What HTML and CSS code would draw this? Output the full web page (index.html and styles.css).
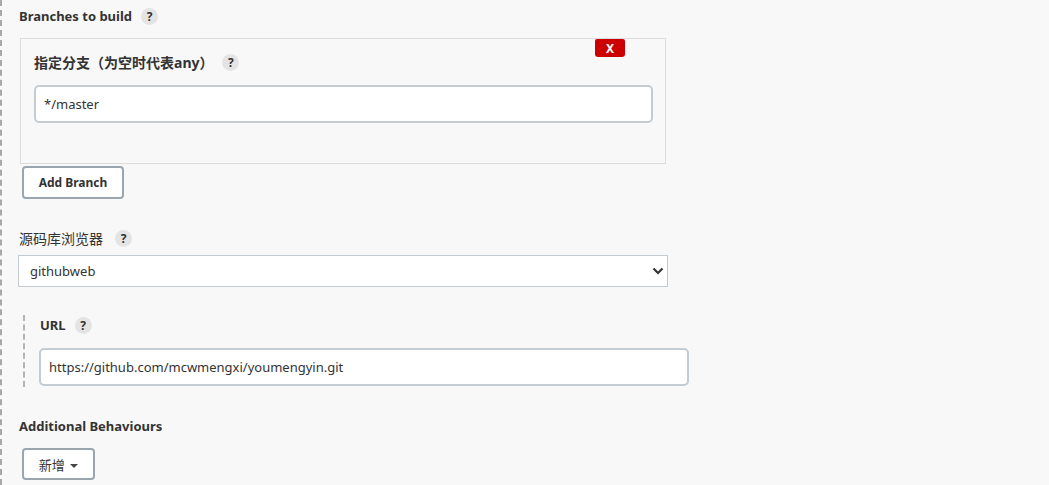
FILE: index.html
```html
<!DOCTYPE html>
<html>
<head>
    <meta charset="utf-8">
    <title>Git configuration</title>
    <link rel="stylesheet" href="styles.css">
</head>
<body>
<div class="page">
    <div class="field-label bold first">
        <span>Branches to build</span>
        <span class="help">?</span>
    </div>

    <div class="repeated">
        <button class="delete" type="button">X</button>
        <div class="field-label bold">
            <span class="cjk">指定分支（为空时代表any）</span>
            <span class="help">?</span>
        </div>
        <input class="text-box" type="text" value="*/master">
    </div>
    <button class="btn add-branch" type="button">Add Branch</button>

    <div class="field-label browser-label">
        <span class="cjk">源码库浏览器</span>
        <span class="help">?</span>
    </div>
    <div class="select-wrap">
        <select class="select-box">
            <option>githubweb</option>
        </select>
        <svg class="chevron" width="12" height="8" viewBox="0 0 12 8"><path d="M1.5 1.5 L6 6 L10.5 1.5" fill="none" stroke="#333" stroke-width="2.2"/></svg>
    </div>

    <div class="nested">
        <div class="field-label bold">
            <span>URL</span>
            <span class="help">?</span>
        </div>
        <input class="text-box url" type="text" value="https://github.com/mcwmengxi/youmengyin.git">
    </div>

    <div class="field-label bold behaviours">
        <span>Additional Behaviours</span>
    </div>
    <button class="btn add-new" type="button">新增 <span class="caret"></span></button>
</div>
</body>
</html>
```
FILE: styles.css
```css
body {
    margin: 0;
    background: #f8f8f8;
    font-family: "Noto Sans", "Noto Sans CJK SC", sans-serif;
    font-size: 13px;
    color: #333;
}
.page {
    border-left: 2px dashed #a8a8a8;
    min-height: 485px;
    padding-left: 17px;
    box-sizing: border-box;
    display: flex;
    flex-direction: column;
    align-items: flex-start;
}
.field-label {
    display: flex;
    align-items: center;
    gap: 9px;
    height: 20px;
}
.cjk {
    font-size: 14px;
}
.bold {
    font-weight: bold;
}
.first {
    margin-top: 6px;
}
.help {
    width: 17px;
    height: 17px;
    border-radius: 50%;
    background: #e4e4e4;
    color: #333;
    font-size: 12px;
    font-weight: bold;
    display: flex;
    align-items: center;
    justify-content: center;
}
.repeated {
    position: relative;
    margin-top: 12px;
    margin-left: 1px;
    width: 646px;
    box-sizing: border-box;
    border: 1px solid #dcdcdc;
    padding: 13px 12px 40px 13px;
}
.delete {
    position: absolute;
    top: 0;
    right: 40px;
    width: 30px;
    height: 18px;
    border: none;
    border-radius: 2px 2px 3px 3px;
    background: #cc0000;
    color: #fff;
    font-family: inherit;
    font-weight: bold;
    font-size: 12px;
    padding: 0;
}
.text-box {
    display: block;
    margin-top: 13px;
    width: 100%;
    height: 38px;
    box-sizing: border-box;
    border: 2px solid #c5ccd1;
    border-radius: 5px;
    background: #fff;
    padding: 0 8px;
    font-family: inherit;
    font-size: 13px;
    color: #333;
}
.btn {
    background: #fff;
    border: 2px solid #9aa5ad;
    border-radius: 4px;
    font-family: inherit;
    font-size: 12px;
    font-weight: bold;
    color: #333;
    margin-left: 3px;
}
.add-branch {
    margin-top: 2px;
    width: 102px;
    height: 33px;
}
.browser-label {
    margin-top: 29px;
    gap: 12px;
}
.select-wrap {
    position: relative;
    margin-top: 7px;
    margin-left: -1px;
}
.select-box {
    appearance: none;
    width: 650px;
    height: 32px;
    border: 1px solid #c3cbd0;
    border-radius: 0;
    background: #fff;
    padding: 0 11px;
    font-family: inherit;
    font-size: 13px;
    color: #333;
}
.chevron {
    position: absolute;
    right: 4px;
    top: 12px;
}
.nested {
    margin-top: 28px;
    margin-left: 4px;
    border-left: 2px dashed #b4b4b4;
    padding-left: 15px;
    padding-bottom: 1px;
    width: 650px;
}
.url {
    margin-left: -1px;
}
.behaviours {
    margin-top: 29px;
}
.add-new {
    margin-top: 12px;
    width: 73px;
    height: 32px;
    font-weight: normal;
    font-size: 13px;
}
.caret {
    display: inline-block;
    width: 0;
    height: 0;
    border-left: 4px solid transparent;
    border-right: 4px solid transparent;
    border-top: 4px solid #444;
    vertical-align: middle;
    margin-left: 2px;
}
```
